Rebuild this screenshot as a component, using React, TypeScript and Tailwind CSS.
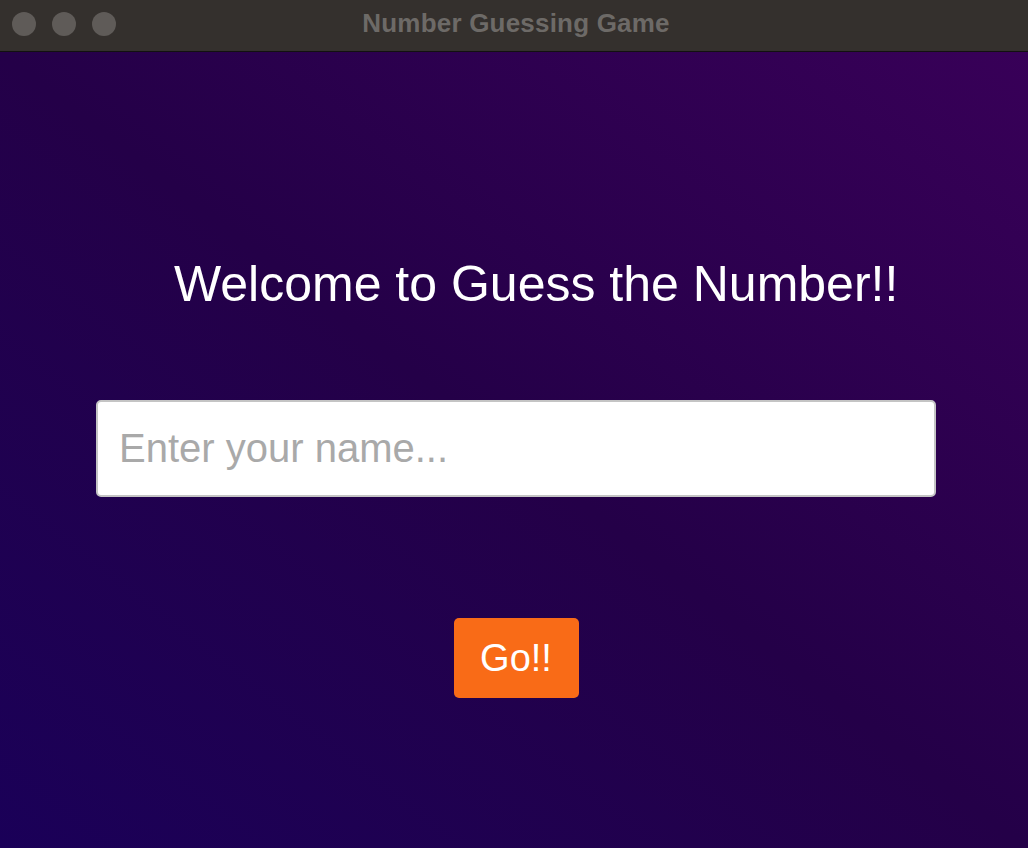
import React from 'react';

function TitleBar() {
  return (
    <div className="relative h-[52px] bg-[#34302d] border-b border-[#121110] flex items-center">
      <div className="flex gap-[16px] pl-[12px] -mt-[4px]">
        <span className="w-[24px] h-[24px] rounded-full bg-[#5f5b58]" />
        <span className="w-[24px] h-[24px] rounded-full bg-[#5f5b58]" />
        <span className="w-[24px] h-[24px] rounded-full bg-[#5f5b58]" />
      </div>
      <div className="absolute inset-0 flex items-center justify-center pointer-events-none -mt-[4px]">
        <span className="text-[26px] font-bold text-[#6d6a67] tracking-[0.2px] pl-[4px]">Number Guessing Game</span>
      </div>
    </div>
  );
}

export default function App() {
  return (
    <div className="w-[1028px] h-[848px] flex flex-col overflow-hidden font-['Liberation_Sans',Arial,sans-serif]">
      <TitleBar />
      <main className="flex-1 flex flex-col bg-gradient-to-tr from-[#1a0058] via-[#240048] to-[#380058]">
        <h1 className="mt-[203px] pl-[174px] text-[50px] leading-[58px] text-white whitespace-nowrap">
          Welcome to Guess the Number!!
        </h1>
        <div className="mt-[87px] px-[96px] pr-[92px]">
          <input
            type="text"
            placeholder="Enter your name..."
            className="w-full h-[97px] rounded-[5px] bg-white border-2 border-[#c4c4c4] px-[21px] text-[40px] text-black placeholder:text-[#a9a9a9] outline-none"
          />
        </div>
        <div className="mt-[121px] flex justify-center pl-[4px]">
          <button className="w-[125px] h-[80px] rounded-[5px] bg-[#f96b17] text-white text-[38px]">Go!!</button>
        </div>
      </main>
    </div>
  );
}
